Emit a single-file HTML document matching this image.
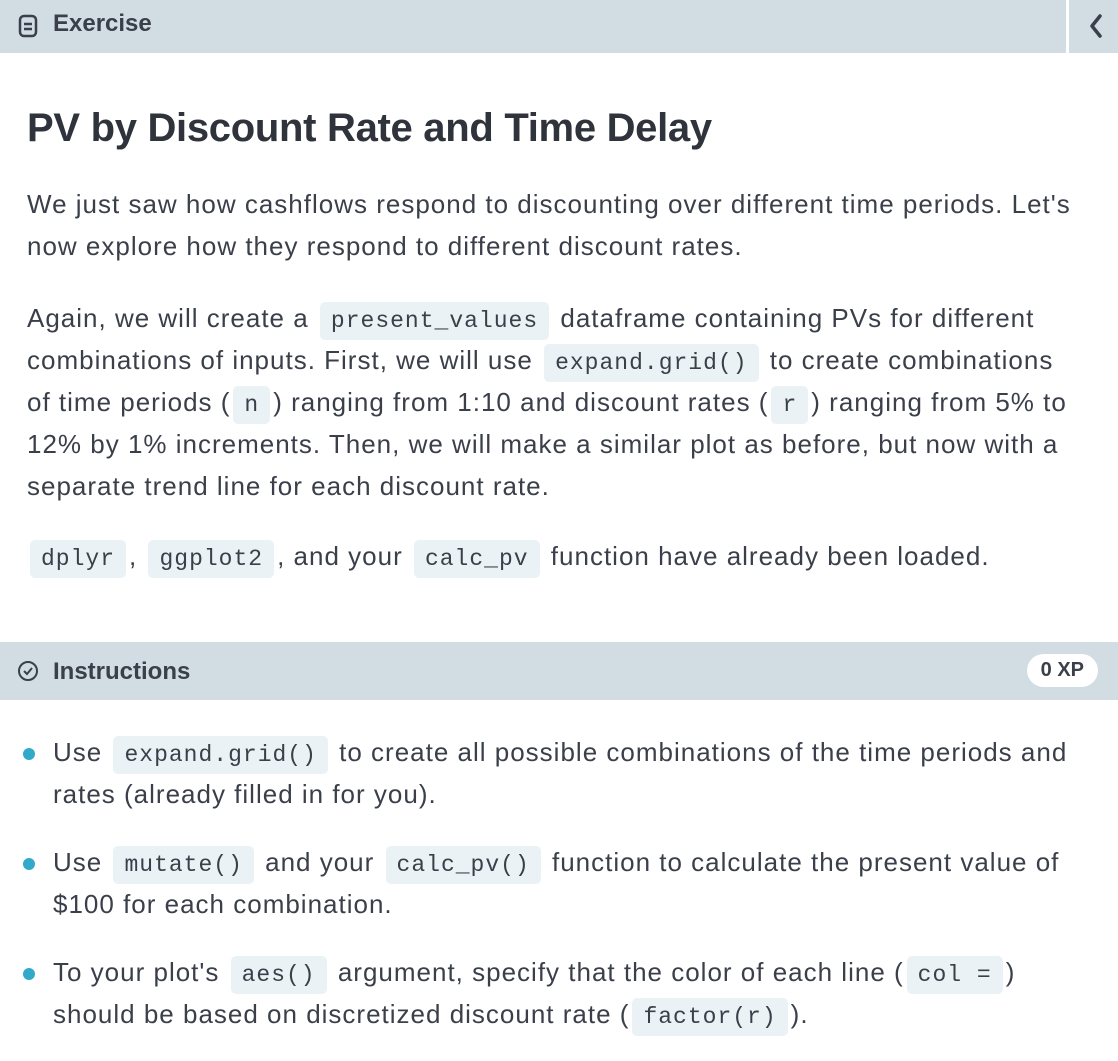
<!DOCTYPE html>
<html><head><meta charset="utf-8"><style>
*{margin:0;padding:0;box-sizing:border-box}
body{width:1118px;height:1050px;overflow:hidden;background:#fff;font-family:"Liberation Sans",sans-serif;color:#3a3f4a}
.hdr{position:absolute;left:0;top:0;width:1066px;height:53px;background:#d1dce3}
.hdr2{position:absolute;left:1069px;top:0;width:49px;height:53px;background:#d1dce3}
.hdr .t{position:absolute;left:53px;top:10px;font-size:24px;font-weight:bold;color:#3a3f4a}
.ins .t{position:absolute;left:53px;top:16px;font-size:24px;font-weight:bold;color:#3a3f4a}
.ttl{position:absolute;left:27px;top:106px;font-size:40px;font-weight:bold;color:#2f333b;letter-spacing:-0.3px}
p{position:absolute;left:27px;width:1100px;font-size:26px;line-height:42px;letter-spacing:1px;white-space:nowrap}
code{font-family:"Liberation Mono",monospace;font-size:23px;line-height:1;letter-spacing:1px;background:#ebf2f5;border-radius:5px;padding:6px 11px;color:#3a3f4a;margin:0 3px}
.ins{position:absolute;left:0;top:642px;width:1118px;height:58px;background:#d1dce3}
.xp{position:absolute;right:20px;top:12px;background:#fff;border-radius:17px;padding:5px 14px;font-size:20px;font-weight:bold}
ul{position:absolute;left:53px;top:731px;width:1060px;list-style:none}
li{font-size:26px;line-height:42px;margin-bottom:26px;position:relative;letter-spacing:1px;white-space:nowrap}
li:before{content:"";position:absolute;left:-30px;top:17px;width:12px;height:12px;border-radius:50%;background:#33a9c9}
</style></head><body>
<div class="hdr">
<svg style="position:absolute;left:18px;top:14px" width="22" height="24" viewBox="0 0 22 24"><rect x="2" y="2" width="16" height="20" rx="4" fill="none" stroke="#3a3f4a" stroke-width="2.5"/><path d="M6 10h8M6 15h8" stroke="#3a3f4a" stroke-width="2.5"/></svg>
<div class="t">Exercise</div></div>
<div class="hdr2"><svg style="position:absolute;left:20px;top:14px" width="14" height="24" viewBox="0 0 14 24"><path d="M11 2L3 12l8 10" fill="none" stroke="#3a3f4a" stroke-width="3.5" stroke-linecap="round" stroke-linejoin="round"/></svg></div>
<div class="ttl">PV by Discount Rate and Time Delay</div>
<p style="top:183px">We just saw how cashflows respond to discounting over different time periods. Let's<br>now explore how they respond to different discount rates.</p>
<p style="top:297px">Again, we will create a <code>present_values</code> dataframe containing PVs for different<br>combinations of inputs. First, we will use <code>expand.grid()</code> to create combinations<br>of time periods (<code>n</code>) ranging from 1:10 and discount rates (<code>r</code>) ranging from 5% to<br>12% by 1% increments. Then, we will make a similar plot as before, but now with a<br>separate trend line for each discount rate.</p>
<p style="top:535px"><code>dplyr</code>, <code>ggplot2</code>, and your <code>calc_pv</code> function have already been loaded.</p>
<div class="ins">
<svg style="position:absolute;left:17px;top:18px" width="22" height="22" viewBox="0 0 22 22"><circle cx="11" cy="11" r="9" fill="none" stroke="#3a3f4a" stroke-width="2"/><path d="M7 11l3 3 5-6" fill="none" stroke="#3a3f4a" stroke-width="2"/></svg>
<div class="t">Instructions</div><div class="xp">0 XP</div></div>
<ul>
<li>Use <code>expand.grid()</code> to create all possible combinations of the time periods and<br>rates (already filled in for you).</li>
<li>Use <code>mutate()</code> and your <code>calc_pv()</code> function to calculate the present value of<br>$100 for each combination.</li>
<li>To your plot's <code>aes()</code> argument, specify that the color of each line (<code>col =</code>)<br>should be based on discretized discount rate (<code>factor(r)</code>).</li>
</ul>
</body></html>
